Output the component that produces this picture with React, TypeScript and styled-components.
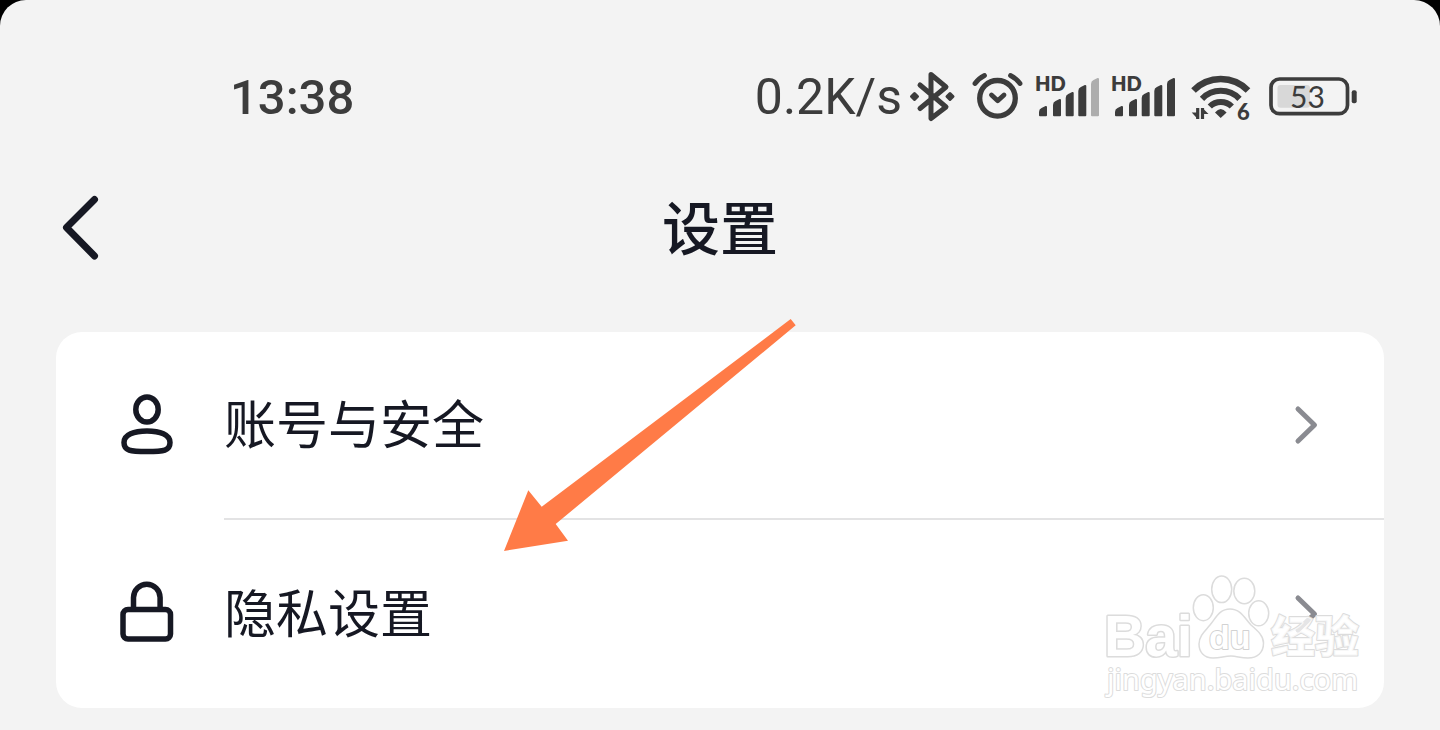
import React from "react";
import styled, { createGlobalStyle } from "styled-components";

const INK = "#161823";
const STATUS = "#3c3c3c";

const GlobalStyle = createGlobalStyle`
  *, *::before, *::after { box-sizing: border-box; }
  body {
    margin: 0;
    background: #000;
    font-family: "Noto Sans CJK SC", sans-serif;
    color: ${INK};
  }
`;

const Screen = styled.div`
  min-height: 100vh;
  padding-top: 60px;
  background: #f3f3f3;
  border-radius: 26px 26px 0 0;
`;

const StatusBar = styled.div`
  display: flex;
  align-items: center;
  justify-content: space-between;
  height: 74px;
  padding: 0 82px 0 230px;
  font-family: Roboto, sans-serif;
  font-size: 50px;
  line-height: 60px;
  color: ${STATUS};
`;

const Clock = styled.time`
  padding-top: 2px;
  font-size: 49px;
  font-weight: 500;
`;

const StatusGroup = styled.div<{ $gap: number }>`
  display: flex;
  align-items: center;
  gap: ${(p) => p.$gap}px;
`;

const StatusIcon = styled.svg`
  display: block;
  height: 50px;
  overflow: visible;
  fill: none;
  stroke-linecap: round;
  stroke-linejoin: round;
`;

const Header = styled.header`
  display: grid;
  grid-template-columns: 120px 1fr 120px;
  align-items: center;
  height: 188px;
`;

const BackButton = styled.button`
  display: flex;
  justify-content: flex-end;
  padding: 0 20px 0 0;
  border: 0;
  background: none;
  color: inherit;
  cursor: pointer;
`;

const Title = styled.h1`
  margin: 0;
  padding-bottom: 6px;
  text-align: center;
  font-size: 58px;
  line-height: 84px;
  font-weight: 500;
`;

const Card = styled.main`
  position: relative;
  margin: 10px 56px 22px;
  background: #fff;
  border-radius: 26px;
`;

const List = styled.ul`
  margin: 0;
  padding: 0;
  list-style: none;
`;

const Row = styled.a`
  display: flex;
  min-height: 188px;
  color: inherit;
  text-decoration: none;
`;

const RowIcon = styled.span`
  display: flex;
  align-items: center;
  width: 168px;
  padding-left: 60px;
`;

const RowBody = styled.span<{ $divided: boolean }>`
  flex: 1;
  display: flex;
  align-items: center;
  justify-content: space-between;
  padding-right: 66px;
  border-bottom: ${(p) => (p.$divided ? "2px solid #e3e3e4" : "0")};
`;

const RowLabel = styled.span`
  padding-bottom: 6px;
  font-size: 52px;
  line-height: 76px;
`;

const LineIcon = styled.svg`
  display: block;
  overflow: visible;
  fill: none;
  stroke: currentColor;
  stroke-linecap: round;
  stroke-linejoin: round;
`;

const Pointer = styled.svg`
  position: absolute;
  left: 448px;
  top: -14px;
  pointer-events: none;
`;

const Watermark = styled.svg`
  position: absolute;
  right: 14px;
  bottom: 6px;
  overflow: visible;
  pointer-events: none;
  fill: rgba(255, 255, 255, 0.8);
  stroke: #dcdcdc;
  stroke-width: 2;
  stroke-linejoin: round;
  text { paint-order: stroke; }
`;

const Bluetooth = () => (
  <StatusIcon width="52" height="50" viewBox="0 0 52 50" aria-label="Bluetooth">
    <path d="M12 13L38 35L23 46.500V2.500L38 15L12 36.500" stroke={STATUS} strokeWidth="5" />
    <path d="M6.500 21.500l3 3-3 3-3-3zM42 21.500l3 3-3 3-3-3z" fill={STATUS} stroke={STATUS} strokeWidth="3" />
  </StatusIcon>
);

const Alarm = () => (
  <StatusIcon width="52" height="50" viewBox="0 0 52 50" stroke={STATUS} aria-label="Alarm">
    <circle cx="25.500" cy="26.300" r="17.800" strokeWidth="5.300" />
    <path d="M19.500 23l6.200 5.800L32 23" strokeWidth="4.800" />
    <path d="M3 11.500Q6.500 6.500 12.500 3.500M48 11.500Q44.500 6.500 38.500 3.500" strokeWidth="4.800" />
  </StatusIcon>
);

const bars = [
  { x: 3, top: 34 },
  { x: 17, top: 27 },
  { x: 29.7, top: 20 },
  { x: 42.3, top: 13 },
  { x: 55, top: 6 },
];

const Signal = ({ level }: { level: number }) => (
  <StatusIcon width="64" height="50" viewBox="0 0 64 50" aria-label="Mobile signal">
    <text x="-1" y="19" fill={STATUS} fontFamily="Lato, sans-serif" fontWeight="800" fontSize="20">HD</text>
    {bars.map(({ x, top }, i) => (
      <path
        key={x}
        d={`M${x + 1} ${top + 6}Q${x + 1} ${top + 4} ${x + 3} ${top + 3}L${x + 7} ${top + 1}V43.300H${x + 1}Z`}
        fill={i < level ? STATUS : "#adadad"}
        stroke={i < level ? STATUS : "#adadad"}
        strokeWidth="2"
      />
    ))}
  </StatusIcon>
);

const Wifi = () => (
  <StatusIcon width="68" height="50" viewBox="0 0 68 50" aria-label="Wi-Fi 6">
    <g stroke={STATUS} strokeWidth="6.400" strokeLinecap="butt">
      <path d="M5.500 18.500A38 38 0 0 1 60 18.500" />
      <path d="M14 26.800A26 26 0 0 1 51.500 26.800" strokeWidth="6" />
      <path d="M21.800 34.500A15.500 15.500 0 0 1 43.800 34.500" strokeWidth="6" />
    </g>
    <path d="M27 40.500Q32.700 33.500 38.600 40.500L32.700 46Z" fill={STATUS} />
    <path d="M9.700 36V47M14.500 47V36" stroke={STATUS} strokeWidth="3.200" strokeLinecap="butt" />
    <path d="M9.700 47L3.700 40.500H9.700ZM14.500 36L20.500 42H14.500Z" fill={STATUS} />
    <text x="49" y="48" fill={STATUS} fontFamily="Lato, sans-serif" fontWeight="900" fontSize="22">6</text>
  </StatusIcon>
);

const Battery = () => (
  <StatusIcon width="90" height="50" viewBox="0 0 90 50" aria-label="Battery 53%">
    <rect x="3" y="7" width="76.500" height="34.700" rx="8.500" stroke={STATUS} strokeWidth="3.700" />
    <rect x="9.500" y="13" width="32.500" height="22.700" rx="3" fill="#d8d8d8" />
    <rect x="83.700" y="18.300" width="5" height="13" rx="2" fill={STATUS} />
    <text x="39.500" y="36" textAnchor="middle" fill={STATUS} fontFamily="Lato, sans-serif" fontSize="30">53</text>
  </StatusIcon>
);

const PersonIcon = () => (
  <LineIcon width="64" height="64" viewBox="0 0 64 64" strokeWidth="5.500" aria-hidden="true">
    <ellipse cx="31" cy="15.500" rx="11.200" ry="12.600" />
    <path d="M31 37C44 37 54 40.500 54 48.500C54 56.500 48 57.600 31 57.600S8 56.500 8 48.500C8 40.500 18 37 31 37Z" />
  </LineIcon>
);

const LockIcon = () => (
  <LineIcon width="64" height="64" viewBox="0 0 64 64" strokeWidth="5.500" aria-hidden="true">
    <rect x="7" y="27.500" width="47.500" height="29.500" rx="5" />
    <path d="M17.500 27V15.500a13.300 13.300 0 0 1 26.600 0V27" />
  </LineIcon>
);

const Chevron = () => (
  <LineIcon width="24" height="40" viewBox="0 0 24 40" strokeWidth="5" color="#8a8b91" aria-hidden="true">
    <path d="M4 4L20.500 20L4 36" />
  </LineIcon>
);

const items = [
  { label: "账号与安全", href: "#account", Icon: PersonIcon },
  { label: "隐私设置", href: "#privacy", Icon: LockIcon },
];

export default function App() {
  return (
    <>
      <GlobalStyle />
      <Screen>
        <StatusBar>
          <Clock>13:38</Clock>
          <StatusGroup $gap={12}>
            <StatusGroup $gap={6}>
              <span>0.2K/s</span>
              <Bluetooth />
            </StatusGroup>
            <Alarm />
            <Signal level={4} />
            <Signal level={5} />
            <Wifi />
            <Battery />
          </StatusGroup>
        </StatusBar>
        <Header>
          <BackButton type="button" aria-label="返回">
            <LineIcon width="40" height="64" viewBox="0 0 40 64" strokeWidth="7">
              <path d="M34.500 3.500L6.500 31.500L34.500 60" />
            </LineIcon>
          </BackButton>
          <Title>设置</Title>
        </Header>
        <Card>
          <List>
            {items.map(({ label, href, Icon }, i) => (
              <li key={href}>
                <Row href={href}>
                  <RowIcon>
                    <Icon />
                  </RowIcon>
                  <RowBody $divided={i < items.length - 1}>
                    <RowLabel>{label}</RowLabel>
                    <Chevron />
                  </RowBody>
                </Row>
              </li>
            ))}
          </List>
          <Pointer width="294" height="234" viewBox="0 0 294 234" aria-hidden="true">
            <path d="M0 233L24.300 172.300L37.700 188.700L286.700 1L291.700 7.300L51.700 206L64 222.700Z" fill="#ff7b47" />
          </Pointer>
          <Watermark width="270" height="132" viewBox="0 0 270 132" aria-hidden="true">
            <g strokeWidth="1.500">
              <ellipse cx="103.300" cy="37.700" rx="10" ry="13" />
              <ellipse cx="121.700" cy="19.300" rx="10" ry="13.300" />
              <ellipse cx="144.300" cy="21" rx="10.500" ry="12.700" />
              <ellipse cx="158.700" cy="43.300" rx="10" ry="12.500" />
              <path d="M130 39C141 39 145 49 151 55C158 61 163.500 66 163.500 73C163.500 83 157 88 148 88C140 88 137 86 131 86C124 86 121 88 113 88C104 88 99 82 99 74C99 66 105 61 110 55C116 48 119 39 130 39Z" />
            </g>
            <text x="4" y="86" fontFamily="Liberation Sans, sans-serif" fontWeight="700" fontSize="57" fill="#fff" strokeWidth="3">Bai</text>
            <text x="109" y="79" fontFamily="Liberation Sans, sans-serif" fontWeight="700" fontSize="34" fill="#fff" stroke="#d2d2d2">du</text>
            <text x="171" y="83" fontFamily="Noto Sans CJK SC, sans-serif" fontWeight="900" fontSize="44">经验</text>
            <text x="7" y="120" fontFamily="Noto Sans, sans-serif" fontSize="29" fill="#fff">jingyan.baidu.com</text>
          </Watermark>
        </Card>
      </Screen>
    </>
  );
}
